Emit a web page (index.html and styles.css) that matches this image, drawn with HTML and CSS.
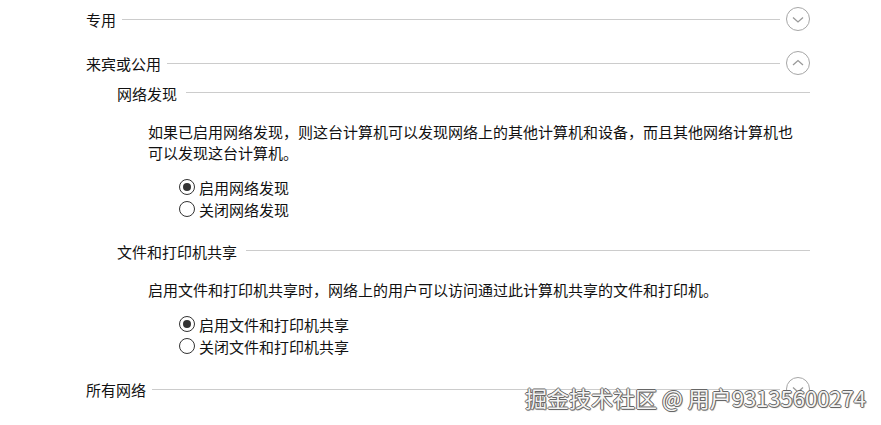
FILE: index.html
```html
<!DOCTYPE html>
<html>
<head>
   <meta charset="utf-8">
   <title>高级共享设置</title>
   <link rel="stylesheet" href="styles.css">
</head>
<body>
   <div class="page">
      <div class="section first">
         <span class="title">专用</span>
         <span class="rule"></span>
         <span class="toggle">
            <svg viewBox="0 0 24 24" width="24" height="24"><circle cx="12" cy="12" r="11.5"></circle><path d="M7 10.5 L12 15 L17 10.5"></path></svg>
         </span>
      </div>

      <div class="section">
         <span class="title">来宾或公用</span>
         <span class="rule"></span>
         <span class="toggle">
            <svg viewBox="0 0 24 24" width="24" height="24"><circle cx="12" cy="12" r="11.5"></circle><path d="M7 14 L12 9.5 L17 14"></path></svg>
         </span>
      </div>

      <div class="sub first-sub">
         <span class="title">网络发现</span>
         <span class="rule"></span>
      </div>
      <p class="desc">如果已启用网络发现，则这台计算机可以发现网络上的其他计算机和设备，而且其他网络计算机也可以发现这台计算机。</p>
      <div class="options">
         <label class="opt"><input type="radio" name="discover" checked> 启用网络发现</label>
         <label class="opt"><input type="radio" name="discover"> 关闭网络发现</label>
      </div>

      <div class="sub">
         <span class="title">文件和打印机共享</span>
         <span class="rule"></span>
      </div>
      <p class="desc">启用文件和打印机共享时，网络上的用户可以访问通过此计算机共享的文件和打印机。</p>
      <div class="options">
         <label class="opt"><input type="radio" name="share" checked> 启用文件和打印机共享</label>
         <label class="opt"><input type="radio" name="share"> 关闭文件和打印机共享</label>
      </div>

      <div class="section last">
         <span class="title">所有网络</span>
         <span class="rule"></span>
         <span class="toggle">
            <svg viewBox="0 0 24 24" width="24" height="24"><circle cx="12" cy="12" r="11.5"></circle><path d="M7 10.5 L12 15 L17 10.5"></path></svg>
         </span>
      </div>
   </div>

   <div class="watermark">掘金技术社区 @ 用户93135600274</div>
</body>
</html>
```

FILE: styles.css
```css
body{
   margin: 0;
   background: #ffffff;
   color: #111111;
   font-family: "Noto Sans CJK SC", "Microsoft YaHei", sans-serif;
   font-size: 15px;
   height: 425px;
   overflow: hidden;
}

.page{
   width: 724px;
   padding: 7px 0 0 86px;
}

.section{
   display: flex;
   align-items: center;
   height: 24px;
   margin-top: 20px;
}
.section.first{
   margin-top: 0;
}
.section.last{
   margin-top: 20px;
}

.title{
   line-height: 21px;
   white-space: nowrap;
}

.rule{
   flex: 1;
   height: 1px;
   background: #cccccc;
   margin: 0 6px;
}

.toggle{
   width: 24px;
   height: 24px;
}
.toggle svg{
   display: block;
}
.toggle circle{
   fill: none;
   stroke: #a6a6a6;
   stroke-width: 1;
}
.toggle path{
   fill: none;
   stroke: #999999;
   stroke-width: 1.3;
}

.sub{
   display: flex;
   align-items: center;
   height: 21px;
   margin: 21px 0 0 31px;
}
.sub.first-sub{
   margin-top: 8px;
}
.sub .rule{
   margin: -2px 0 0 9px;
}

.desc{
   width: 650px;
   margin: 17px 0 0 62px;
   line-height: 21px;
}

.options{
   margin: 13px 0 0 93px;
}

.opt{
   display: flex;
   align-items: center;
   height: 22px;
}

.opt input{
   appearance: none;
   -webkit-appearance: none;
   width: 16px;
   height: 16px;
   margin: 0 4px 0 0;
   border: 1px solid #333333;
   border-radius: 50%;
   background: #ffffff;
   position: relative;
}
.opt input:checked::after{
   content: "";
   position: absolute;
   left: 3px;
   top: 3px;
   width: 8px;
   height: 8px;
   border-radius: 50%;
   background: #333333;
}

.watermark{
   position: absolute;
   right: 15px;
   bottom: 12px;
   font-size: 22px;
   color: #f4f4f4;
   text-shadow: 1px 0 0 #666, -1px 0 0 #666, 0 1px 0 #666, 0 -1px 0 #666, 1px 1px 1px #888;
   white-space: nowrap;
}
```
